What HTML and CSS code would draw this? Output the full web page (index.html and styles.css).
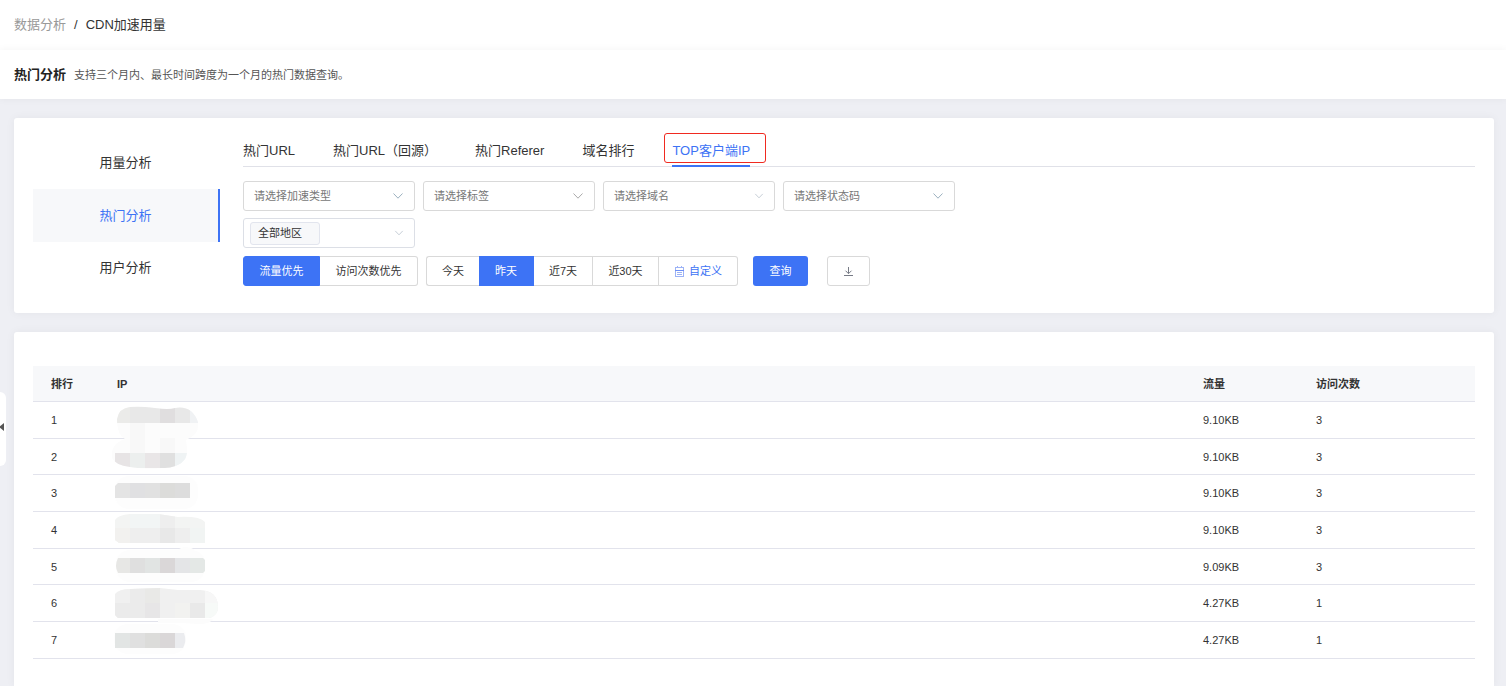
FILE: index.html
```html
<!DOCTYPE html>
<html lang="zh-CN">
<head>
<meta charset="utf-8">
<title>CDN加速用量</title>
<link rel="stylesheet" href="styles.css">
</head>
<body>
<svg class="defs" aria-hidden="true">
  <symbol id="chevron" viewBox="0 0 12 12"><path d="M1.5 3.5 6 8.2l4.500-4.700" fill="none" stroke="currentColor"/></symbol>
</svg>

<nav class="breadcrumb" aria-label="面包屑">
  <a href="#">数据分析</a><span class="slash">/</span><span>CDN加速用量</span>
</nav>

<header class="page-head">
  <h1>热门分析</h1>
  <p>支持三个月内、最长时间跨度为一个月的热门数据查询。</p>
</header>

<button class="drawer" type="button" aria-label="收起菜单">
  <svg width="6" height="10" viewBox="0 0 6 10"><path d="M4 1v8L-1 5z" fill="#555"/></svg>
</button>

<main class="main">
  <section class="card query">
    <nav class="side">
      <a href="#">用量分析</a>
      <a href="#" class="active">热门分析</a>
      <a href="#">用户分析</a>
    </nav>
    <div class="panel">
      <nav class="tabs">
        <a href="#">热门URL</a>
        <a href="#">热门URL（回源）</a>
        <a href="#">热门Referer</a>
        <a href="#">域名排行</a>
        <a href="#" class="active">TOP客户端IP</a>
      </nav>
      <form class="filters">
        <div class="row">
          <div class="field"><select aria-label="加速类型"><option>请选择加速类型</option></select><svg class="arrow blue"><use href="#chevron"/></svg></div>
          <div class="field"><select aria-label="标签"><option>请选择标签</option></select><svg class="arrow"><use href="#chevron"/></svg></div>
          <div class="field"><select aria-label="域名"><option>请选择域名</option></select><svg class="arrow small"><use href="#chevron"/></svg></div>
          <div class="field"><select aria-label="状态码"><option>请选择状态码</option></select><svg class="arrow blue"><use href="#chevron"/></svg></div>
        </div>
        <div class="row">
          <div class="field tagged"><select aria-label="地区"><option>全部地区</option></select><svg class="arrow small"><use href="#chevron"/></svg></div>
        </div>
        <div class="row">
          <div class="group priority">
            <button type="button" class="on">流量优先</button><button type="button">访问次数优先</button>
          </div>
          <div class="group dates">
            <button type="button">今天</button><button type="button" class="on">昨天</button><button type="button">近7天</button><button type="button">近30天</button><button type="button" class="custom"><svg width="11" height="11" viewBox="0 0 11 11" fill="none" stroke="#9db3f6"><path d="M1 1.500h9M1.500 1v9.500M9.500 1v9.500M1 10.500h9M3.500 0v2M7.500 0v2M3 6.500h5M3 8.500h5"/><path stroke="#6d8ff5" d="M1 4.500h9"/></svg>自定义</button>
          </div>
          <button type="submit" class="submit">查询</button>
          <button type="button" class="download" aria-label="下载"><svg width="11" height="11" viewBox="0 0 11 11" fill="none" stroke="#777b86"><path d="M5.500 1v6.500M2.500 4.700l3 3 3-3M1 9.500h9"/></svg></button>
        </div>
      </form>
    </div>
  </section>

  <section class="card result">
    <div class="table-wrap">
      <table>
        <thead><tr><th class="c-rank">排行</th><th>IP</th><th class="c-flow">流量</th><th class="c-count">访问次数</th></tr></thead>
        <tbody>
          <tr><td>1</td><td></td><td>9.10KB</td><td>3</td></tr>
          <tr><td>2</td><td></td><td>9.10KB</td><td>3</td></tr>
          <tr><td>3</td><td></td><td>9.10KB</td><td>3</td></tr>
          <tr><td>4</td><td></td><td>9.10KB</td><td>3</td></tr>
          <tr><td>5</td><td></td><td>9.09KB</td><td>3</td></tr>
          <tr><td>6</td><td></td><td>4.27KB</td><td>1</td></tr>
          <tr><td>7</td><td></td><td>4.27KB</td><td>1</td></tr>
        </tbody>
      </table>
      <!-- masked addresses; x runs from the mask's left edge, y from the header's lower line -->
      <svg class="mask" width="110" height="252" viewBox="0 0 110 252" aria-hidden="true">
        <clipPath id="m1"><path d="M7 17Q9 6 20 5q10-1 25 1 14 2 20 0 17-3 23 14 2 12-12 18l1 8q2 18-22 20-20 2-35-1-15-2-18-9-2-14 13-19-8-4-8-20z"/></clipPath>
        <g clip-path="url(#m1)">
          <path fill="#fcfcfc" d="M0 0h110v68H0z"/>
          <path fill="#ebebe9" d="M5 4h15v17H5z"/><path fill="#e8e8e8" d="M20 4h30v17H20z"/><path fill="#e0dedf" d="M50 4h15v17H50z"/><path fill="#e8e8e8" d="M65 4h15v17H65z"/><path fill="#f0f2f4" d="M80 4h15v17H80z"/>
          <path fill="#f8f8f8" d="M20 21h15v30H20zM50 36h15v15H50z"/>
          <path fill="#e7e4e5" d="M5 51h15v15H5z"/><path fill="#ecefee" d="M20 51h15v15H20z"/><path fill="#e9e6e7" d="M35 51h15v15H35z"/><path fill="#e0e0e0" d="M50 51h15v15H50z"/><path fill="#eff3f4" d="M65 51h15v15H65z"/>
        </g>
        <rect x="5" y="74" width="83" height="33" rx="14" fill="#fdfdfd"/>
        <path fill="#e4e4e4" d="M5 84l3-3h12v15H5z"/><path fill="#e0e0e2" d="M20 81h15v15H20z"/><path fill="#e1e1e1" d="M35 81h15v15H35z"/><path fill="#dcdcda" d="M50 81h15v15H50z"/><path fill="#dddddd" d="M65 81h15v15H65z"/>
        <clipPath id="m4"><path d="M5 118q3-5 15-6h28l20 3q22-1 27 5v21H9l-4-3z"/></clipPath>
        <g clip-path="url(#m4)">
          <path fill="#f3f4f3" d="M0 108h100v40H0z"/><path fill="#f2f5f5" d="M20 108h30v18H20z"/><path fill="#eeeeee" d="M50 108h15v18H50zM20 126h30v15H20zM65 126h15v15H65z"/><path fill="#f2f1ef" d="M5 126h15v15H5z"/><path fill="#e8e8e8" d="M50 126h15v15H50z"/><path fill="#f1f4f3" d="M80 126h15v15H80z"/>
        </g>
        <rect x="6" y="148" width="89" height="32" rx="14" fill="#fdfdfd"/>
        <path fill="#fdfdfd" d="M68 148q3-3 8-3t9 3z"/>
        <path fill="#e7e7e5" d="M20 156H8q-4 8 0 15h12z"/><path fill="#dfdfdf" d="M20 156h15v15H20z"/><path fill="#e1e4e3" d="M35 156h15v15H35z"/><path fill="#dad7d8" d="M50 156h15v15H50z"/><path fill="#e4e5e7" d="M65 156h15v15H65z"/><path fill="#e4e8e6" d="M80 156h13l2 2v11l-2 2H80z"/>
        <path fill="#fcfcfc" d="M48 217h55q-2 5-15 5-25-2-40-1z"/>
        <clipPath id="m6"><path d="M5 192q4-5 15-5l30-1 18 2h22q18 1 18 17 0 9-9 11H8l-3-3z"/></clipPath>
        <g clip-path="url(#m6)">
          <path fill="#f0f0f0" d="M0 184h110v34H0z"/><path fill="#ebebeb" d="M20 184h15v17H20zM5 201h30v15H5z"/><path fill="#e9e9e7" d="M35 184h15v17H35z"/><path fill="#e7e6e7" d="M35 201h15v15H35z"/><path fill="#f2f2f0" d="M65 201h15v15H65z"/><path fill="#e9e9e9" d="M80 201h15v15H80z"/><path fill="#f7f7f7" d="M95 184h15v17H95z"/><path fill="#f7faf8" d="M95 201h15v15H95z"/>
        </g>
        <rect x="4" y="222" width="72" height="30" rx="14" fill="#fdfdfd"/>
        <path fill="#e2e5e4" d="M5 231h15v15H5z"/><path fill="#e0e0e0" d="M20 231h15v15H20z"/><path fill="#dcdcda" d="M35 231h15v15H35z"/><path fill="#dad7d8" d="M50 231h15v15H50z"/><path fill="#ebecef" d="M65 231h9q3 8-1 15h-8z"/>
      </svg>
    </div>
  </section>
</main>
</body>
</html>
```
FILE: styles.css
```css
* { box-sizing: border-box; }
html { height: 100%; }
body {
  margin: 0;
  min-height: 100%;
  display: flex;
  flex-direction: column;
  background: #eeeff4;
  color: #333;
  font: 13px/20px "Liberation Sans", "Noto Sans CJK SC", sans-serif;
}
a { color: inherit; text-decoration: none; }
svg { display: block; flex: none; }
button, select { font: inherit; color: inherit; margin: 0; }
button { cursor: pointer; }
.defs { display: none; }

.breadcrumb {
  display: flex;
  align-items: center;
  gap: 8px;
  padding: 0 14px;
  height: 50px;
  background: #fff;
}
.breadcrumb a { color: #999; }

.page-head {
  position: relative;
  display: flex;
  align-items: center;
  gap: 8px;
  padding: 1px 14px 0;
  height: 49px;
  background: #fff;
  box-shadow: 0 0 8px rgba(0, 0, 0, .05);
}
.page-head h1 { margin: 0; font-size: 13px; line-height: 20px; color: #222; }
.page-head p { margin: 0; font-size: 11px; color: #555; }

.drawer {
  position: fixed;
  left: 0;
  top: 392px;
  width: 6px;
  height: 74px;
  padding: 0 0 4px;
  border: 0;
  border-radius: 0 6px 6px 0;
  background: #fff;
}

.main {
  flex: 1;
  display: flex;
  flex-direction: column;
  gap: 19px;
  padding: 19px 12px 0 14px;
}
.card {
  padding: 18px 19px;
  background: #fff;
  border-radius: 3px;
  box-shadow: 0 0 10px rgba(0, 0, 0, .05);
}

.query { display: flex; gap: 23px; padding-bottom: 19px; }
.side { width: 187px; flex: none; padding-top: 1px; }
.side a {
  display: block;
  line-height: 52px;
  text-align: center;
  border-right: 2px solid transparent;
}
.side .active { line-height: 53px; color: #3d73f5; background: #f7f8fa; border-color: #3d73f5; }

.panel { flex: 1; min-width: 0; }
.tabs {
  display: flex;
  gap: 38px;
  border-bottom: 1px solid #e0e1e8;
}
.tabs a {
  position: relative;
  line-height: 29px;
  margin-bottom: -1px;
  border-bottom: 2px solid transparent;
  white-space: nowrap;
}
.tabs .active { color: #3d73f5; border-color: #3d73f5; }
.tabs .active::after {
  content: "";
  position: absolute;
  inset: -3px -16px 2px -8px;
  border: 1px solid #f02a20;
  border-radius: 3px;
}

.filters {
  display: flex;
  flex-direction: column;
  gap: 8px;
  padding-top: 14px;
  font-size: 11px;
}
.row { display: flex; flex-wrap: wrap; gap: 8px; }
.row:first-child { margin-bottom: -1px; }
.field {
  display: flex;
  align-items: center;
  position: relative;
  width: 172px;
  height: 30px;
  border: 1px solid #d9d9d9;
  border-radius: 3px;
  background: #fff;
}
.field select {
  appearance: none;
  width: 100%;
  height: 28px;
  padding: 0 30px 0 10px;
  border: 0;
  background: transparent;
  color: #777;
}
.arrow {
  position: absolute;
  right: 10px;
  width: 12px;
  height: 12px;
  color: #aaa;
  pointer-events: none;
}
.arrow.blue { color: #9cb1bf; }
.arrow.small { color: #bcc5cf; width: 10px; }
.field.tagged { padding-left: 6px; border-color: #dcdfe6; }
.tagged select {
  width: 70px;
  height: 23px;
  padding: 0 7px;
  border: 1px solid #e2e5ee;
  border-radius: 3px;
  background: #f7f8fa;
  color: #333;
}

.group { display: grid; }
.priority { grid-template-columns: 77px 98px; }
.dates { grid-template-columns: 53px 55px 59px 66px 79px; }
.group button, .download {
  height: 30px;
  padding: 0;
  border: 1px solid #d9d9d9;
  background: #fff;
}
.group button + button { border-left-width: 0; }
.group button:first-child { border-radius: 3px 0 0 3px; }
.group button:last-child { border-radius: 0 3px 3px 0; }
.group .on { background: #3d73f5; border-color: #3d73f5; color: #fff; }
.dates button:first-child { border-right-width: 0; }
.group .custom { display: flex; align-items: center; justify-content: center; gap: 4px; color: #3d73f5; }
.submit {
  width: 55px;
  height: 30px;
  margin: 0 11px 0 7px;
  padding: 0;
  border: 0;
  border-radius: 3px;
  background: #3d73f5;
  color: #fff;
}
.download { display: grid; place-items: center; width: 43px; border-radius: 3px; }

.result { flex: 1; padding: 34px 19px 27px; border-radius: 3px 3px 0 0; }
.table-wrap { position: relative; }
table { width: 100%; border-collapse: separate; border-spacing: 0; font-size: 11px; table-layout: fixed; }
th, td {
  height: 37px;
  padding: 0 18px;
  border-bottom: 1px solid #e2e3ec;
  text-align: left;
}
th { height: 36px; background: #f7f8fa; }
tr:nth-child(3n+2) td { height: 36px; }
.c-rank { width: 66px; }
.c-flow { width: 113px; }
.c-count { width: 177px; }
.mask { position: absolute; left: 77px; top: 36px; }
```
